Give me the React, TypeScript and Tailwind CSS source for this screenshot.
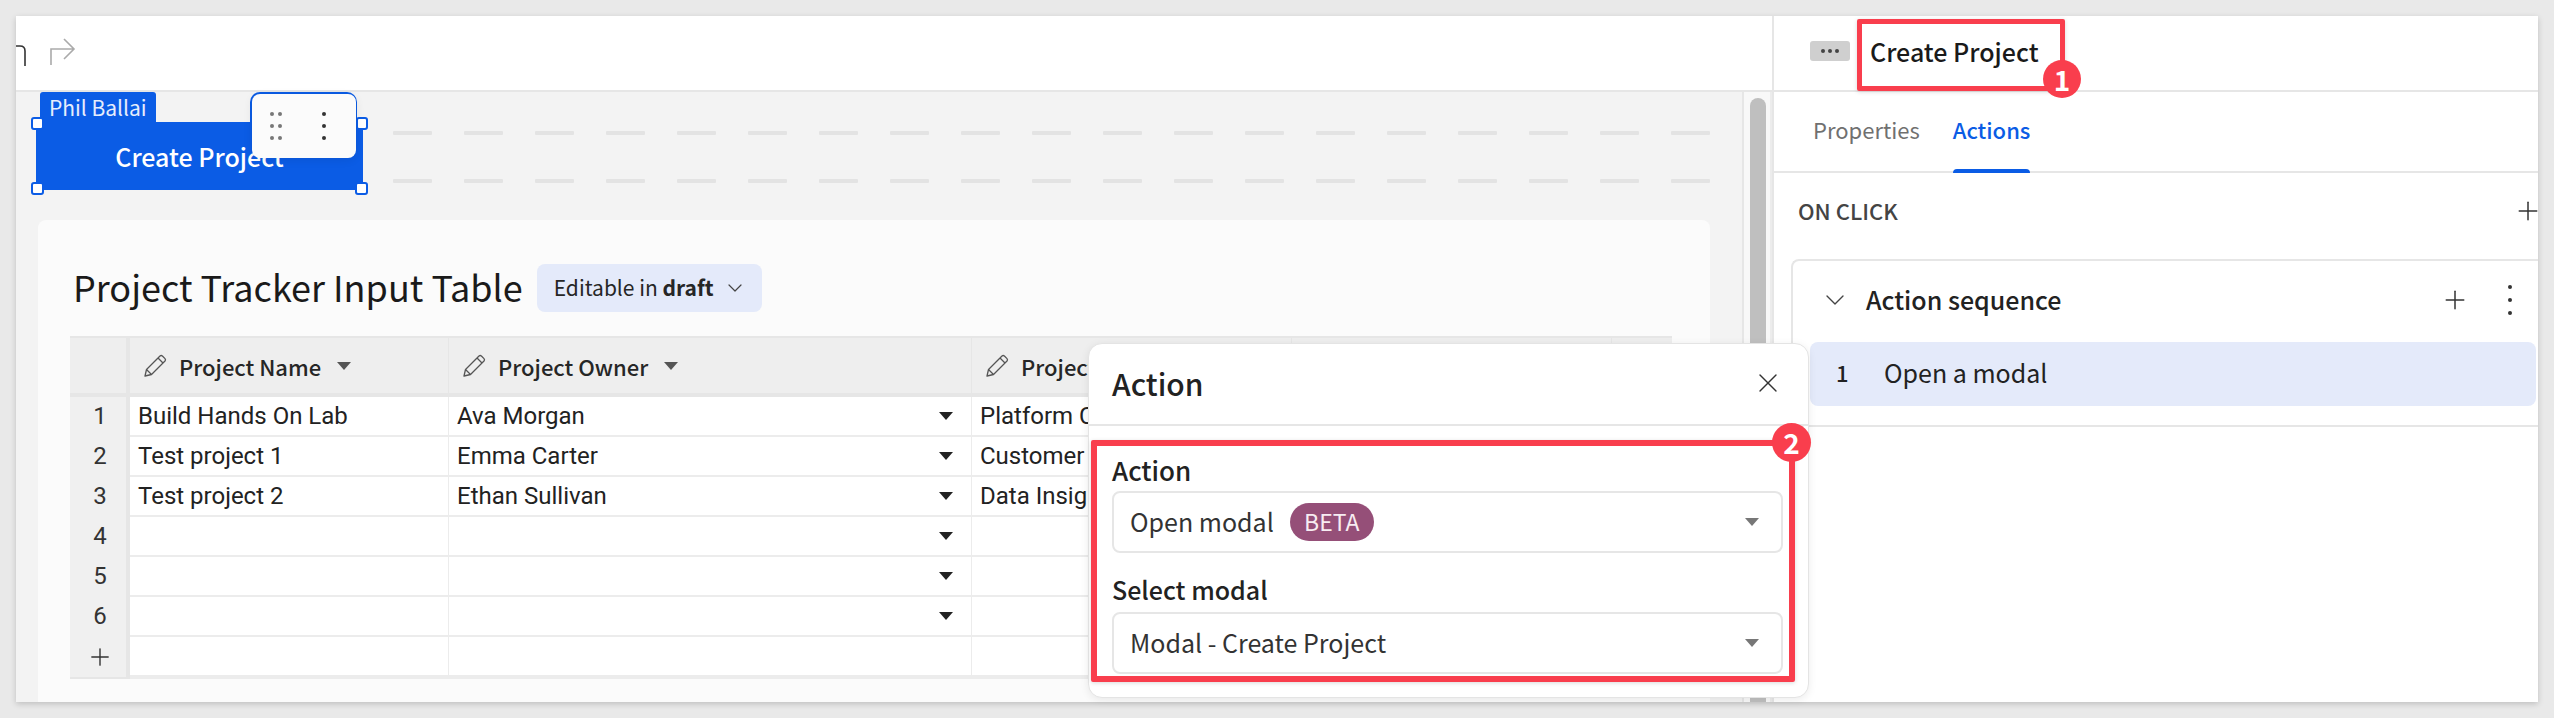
import { ChevronDown, Plus, X } from "lucide-react";

const dashes = Array.from({ length: 19 }, (_, i) => i);

const rows = [
  { n: "1", name: "Build Hands On Lab", owner: "Ava Morgan", team: "Platform Core" },
  { n: "2", name: "Test project 1", owner: "Emma Carter", team: "Customer Portal" },
  { n: "3", name: "Test project 2", owner: "Ethan Sullivan", team: "Data Insights" },
  { n: "4", name: "", owner: "", team: "" },
  { n: "5", name: "", owner: "", team: "" },
  { n: "6", name: "", owner: "", team: "" },
];

function PencilIcon() {
  return (
    <svg width="23" height="23" viewBox="0 0 23 23" fill="none" stroke="#555" strokeWidth="1.3" strokeLinejoin="round" className="shrink-0">
      <path d="M1 22 L2.5 15.5 L16 2 Q17.2 1 18.4 2 L21 4.6 Q22 5.8 21 7 L7.5 20.5 Z" />
      <path d="M14 4 L19 9 M2.5 15.5 L7.5 20.5" />
    </svg>
  );
}

function Caret({ className }: { className: string }) {
  return (
    <svg width="14" height="8" viewBox="0 0 14 8" className={className}>
      <path d="M0 0 H14 L7 8 Z" fill="currentColor" />
    </svg>
  );
}

function HeaderCell({ label, className }: { label: string; className: string }) {
  return (
    <div className={`flex items-center gap-[12px] border-r border-[#e6e6e6] pl-[14px] overflow-hidden ${className}`}>
      <PencilIcon />
      <span className="font-['Noto_Sans_CJK_SC'] text-[22px] leading-[30px] font-medium text-[#262626] whitespace-nowrap">{label}</span>
      <Caret className="ml-[4px] text-[#555] shrink-0" />
    </div>
  );
}

function Dots() {
  return (
    <div className="flex flex-col gap-[8px]">
      <span className="w-[4px] h-[4px] rounded-full bg-[#333]" />
      <span className="w-[4px] h-[4px] rounded-full bg-[#333]" />
      <span className="w-[4px] h-[4px] rounded-full bg-[#333]" />
    </div>
  );
}

export default function App() {
  return (
    <div className="w-[2554px] h-[718px] bg-[#e9e9e9] p-[16px] pr-[16px] overflow-hidden font-['Noto_Sans_CJK_SC','Noto_Sans',sans-serif]">
      <div className="relative flex h-full bg-white shadow-[0_2px_6px_rgba(0,0,0,0.18)]">
        {/* Left: workbook canvas */}
        <div className="w-[1758px] h-full flex flex-col border-r-2 border-[#e6e6e6] overflow-hidden">
          <div className="h-[76px] shrink-0 flex items-center border-b-2 border-[#e6e6e6] overflow-hidden">
            <svg width="26" height="30" viewBox="0 0 26 30" fill="none" stroke="#333" strokeWidth="1.6" className="ml-[-16px] shrink-0">
              <path d="M4 8 H20 Q25 8 25 13 V28" />
            </svg>
            <svg width="28" height="30" viewBox="0 0 28 30" fill="none" stroke="#aaa" strokeWidth="1.6" className="ml-[23px] shrink-0 mt-[-4px]">
              <path d="M2 29 V13 H24 M15 3 L25 13 L15 23" />
            </svg>
          </div>

          <div className="flex flex-1 min-h-0">
            <div className="w-[1728px] flex flex-col bg-[#f3f3f3] border-r-2 border-[#e6e6e6]">
              <div className="flex h-[128px] shrink-0">
                <div className="relative ml-[20px] mt-[30px] w-[327px] h-[68px] bg-[#0b5ce5] flex items-center justify-center">
                  <span className="text-[25px] leading-[34px] font-medium text-white">Create Project</span>
                </div>
                <div className="ml-[30px] mt-[39px] w-[1318px] h-[52px] flex flex-col justify-between overflow-hidden">
                  <div className="flex gap-[32px]">
                    {dashes.map((d) => (
                      <span key={d} className="w-[39px] h-[4px] shrink-0 rounded-[1px] bg-[#e3e3e3]" />
                    ))}
                  </div>
                  <div className="flex gap-[32px]">
                    {dashes.map((d) => (
                      <span key={d} className="w-[39px] h-[4px] shrink-0 rounded-[1px] bg-[#e3e3e3]" />
                    ))}
                  </div>
                </div>
              </div>

              <div className="ml-[22px] w-[1672px] flex-1 rounded-t-lg bg-[#fbfbfb] pt-[44px] pl-[32px]">
                <div className="flex items-center h-[48px] pl-[3px] mb-[24px]">
                  <h1 className="text-[36px] leading-[48px] font-normal text-[#1a1a1a] mt-[-5px]">Project Tracker Input Table</h1>
                  <div className="ml-[14px] w-[225px] h-[48px] rounded-lg bg-[#e4eafa] flex items-center pl-[17px] text-[21px] text-[#262626] whitespace-nowrap">
                    <span>
                      Editable in <b className="font-semibold">draft</b>
                    </span>
                    <ChevronDown size={24} strokeWidth={1.2} className="ml-[9px] text-[#444]" />
                  </div>
                </div>

                <div className="w-[1602px] border-t-2 border-[#e6e6e6]">
                  <div className="flex h-[59px] bg-[#eeeeee] border-b-4 border-[#e6e6e6]">
                    <div className="w-[60px] border-r-4 border-[#e6e6e6]" />
                    <HeaderCell label="Project Name" className="w-[319px]" />
                    <HeaderCell label="Project Owner" className="w-[523px]" />
                    <HeaderCell label="Project Team" className="w-[320px]" />
                    <div className="w-[320px] border-r border-[#e6e6e6]" />
                    <div className="flex-1" />
                  </div>
                  {rows.map((r) => (
                    <div key={r.n} className="flex h-[40px] font-['Roboto'] text-[24px] leading-[38px] text-[#222]">
                      <div className="w-[60px] bg-[#f0f0f0] border-r-4 border-[#e6e6e6] text-center text-[#333] pl-[4px]">{r.n}</div>
                      <div className="w-[319px] bg-white border-b-2 border-r border-[#ececec] pl-[8px]">{r.name}</div>
                      <div className="w-[523px] bg-white border-b-2 border-r border-[#ececec] pl-[8px] flex justify-between items-center pr-[18px]">
                        <span>{r.owner}</span>
                        <Caret className="text-[#222]" />
                      </div>
                      <div className="w-[320px] bg-white border-b-2 border-r border-[#ececec] pl-[8px]">{r.team}</div>
                    </div>
                  ))}
                  <div className="flex h-[42px] font-['Roboto'] text-[28px] leading-[38px]">
                    <div className="w-[60px] bg-[#f0f0f0] border-r-4 border-b-2 border-[#e6e6e6] flex items-center justify-center pl-[4px]">
                      <Plus size={28} strokeWidth={1.2} className="text-[#333]" />
                    </div>
                    <div className="w-[319px] bg-white border-b-4 border-r border-[#ececec]" />
                    <div className="w-[523px] bg-white border-b-4 border-r border-[#ececec]" />
                    <div className="w-[320px] bg-white border-b-4 border-r border-[#ececec]" />
                  </div>
                </div>
              </div>
            </div>

            {/* Scrollbar */}
            <div className="flex-1 bg-[#f8f8f8] pl-[6px] pt-[6px] border-r-2 border-[#ececec]">
              <div className="w-[16px] h-full rounded-t-full bg-[#bfbfbf]" />
            </div>
          </div>
        </div>

        {/* Right: properties panel */}
        <div className="flex-1 min-w-0 flex flex-col overflow-hidden">
          <div className="h-[76px] shrink-0 flex items-center border-b-2 border-[#e6e6e6] pl-[36px] pb-[2px]">
            <div className="w-[40px] h-[20px] rounded-[3px] bg-[#cfcfcf] flex items-center justify-center gap-[3px] mt-[-2px]">
              <span className="w-[4px] h-[4px] rounded-full bg-[#444]" />
              <span className="w-[4px] h-[4px] rounded-full bg-[#444]" />
              <span className="w-[4px] h-[4px] rounded-full bg-[#444]" />
            </div>
            <span className="ml-[20px] text-[25px] leading-[34px] font-medium text-[#1a1a1a] mt-[-2px]">Create Project</span>
          </div>

          <div className="h-[81px] shrink-0 flex border-b-2 border-[#e6e6e6] pl-[39px] gap-[33px] text-[22px]">
            <div className="h-full flex items-center pb-[4px] text-[#707070]">Properties</div>
            <div className="relative h-full flex items-center pb-[4px] text-[#0b5ce5] font-medium">
              Actions
              <span className="absolute left-0 right-0 bottom-[-2px] h-[4px] rounded-t-sm bg-[#0b5ce5]" />
            </div>
          </div>

          <div className="flex items-center justify-between h-[80px] pl-[24px] pb-[5px] shrink-0">
            <span className="text-[22px] font-medium text-[#444]">ON CLICK</span>
            <Plus size={30} strokeWidth={1.2} className="text-[#333] mr-[-5px]" />
          </div>

          <div className="ml-[17px] mt-[6px] h-[168px] shrink-0 border-t-2 border-l-2 border-b-2 border-[#e6e6e6] rounded-tl-lg pl-[17px] pb-[18px]">
            <div className="flex items-center h-[78px] pl-[9px] pr-[26px] pb-[1px]">
              <ChevronDown size={32} strokeWidth={1} className="text-[#444]" />
              <span className="ml-[15px] text-[25px] font-medium text-[#222]">Action sequence</span>
              <Plus size={30} strokeWidth={1.2} className="ml-auto text-[#333]" />
              <div className="ml-[38px] flex flex-col gap-[9px]">
                <span className="w-[4px] h-[4px] rounded-full bg-[#333]" />
                <span className="w-[4px] h-[4px] rounded-full bg-[#333]" />
                <span className="w-[4px] h-[4px] rounded-full bg-[#333]" />
              </div>
            </div>
            <div className="mt-[3px] h-[64px] w-[726px] rounded-lg bg-[#e4eafa] flex items-center pl-[26px] pb-[3px] text-[25px] text-[#222]">
              <span className="w-[48px] font-medium text-[22px]">1</span>
              <span>Open a modal</span>
            </div>
          </div>
        </div>

        {/* Selected element overlays */}
        <div className="absolute left-[24px] top-[76px] w-[116px] h-[30px] rounded-t-[3px] bg-[#0b5ce5] text-[21px] leading-[30px] text-[#e6edfc] pl-[9px]">
          Phil Ballai
        </div>
        <span className="absolute left-[15px] top-[101px] w-[13px] h-[13px] rounded-[3px] border-2 border-[#0b5ce5] bg-white" />
        <span className="absolute left-[340px] top-[101px] w-[12px] h-[13px] rounded-[3px] border-2 border-[#0b5ce5] bg-white" />
        <span className="absolute left-[15px] top-[166px] w-[13px] h-[13px] rounded-[3px] border-2 border-[#0b5ce5] bg-white" />
        <span className="absolute left-[339px] top-[166px] w-[13px] h-[13px] rounded-[3px] border-2 border-[#0b5ce5] bg-white" />
        <div className="absolute left-[234px] top-[76px] w-[107px] h-[40px] rounded-t-[10px] bg-[#0b5ce5]" />
        <div className="absolute left-[236px] top-[78px] w-[104px] h-[64px] rounded-[8px] bg-[#fbfbfb] shadow-[0_2px_10px_rgba(0,0,0,0.08)] flex items-center justify-between pl-[18px] pr-[15px]">
          <div className="flex gap-[4px]">
            <div className="flex flex-col gap-[8px]">
              <span className="w-[4px] h-[4px] rounded-full bg-[#777]" />
              <span className="w-[4px] h-[4px] rounded-full bg-[#777]" />
              <span className="w-[4px] h-[4px] rounded-full bg-[#777]" />
            </div>
            <div className="flex flex-col gap-[8px]">
              <span className="w-[4px] h-[4px] rounded-full bg-[#777]" />
              <span className="w-[4px] h-[4px] rounded-full bg-[#777]" />
              <span className="w-[4px] h-[4px] rounded-full bg-[#777]" />
            </div>
          </div>
          <div className="mr-[15px]">
            <Dots />
          </div>
        </div>

        {/* Action popover */}
        <div className="absolute left-[1072px] top-[327px] w-[721px] h-[355px] rounded-[14px] bg-white border border-[#e4e4e4] shadow-[0_2px_8px_rgba(0,0,0,0.08)]">
          <div className="h-[82px] flex items-center justify-between border-b-2 border-[#e6e6e6] pl-[23px] pr-[24px] pb-[2px]">
            <span className="text-[30px] font-medium text-[#222]">Action</span>
            <X size={32} strokeWidth={1} className="text-[#333]" />
          </div>
          <div className="px-[23px] pr-[25px] pt-[24px]">
            <div className="text-[26px] leading-[40px] font-medium text-[#222]">Action</div>
            <div className="mt-[1px] h-[62px] rounded-lg border-2 border-[#e6e6e6] flex items-center pl-[16px] pr-[22px] text-[25px] text-[#333]">
              <span>Open modal</span>
              <span className="ml-[16px] w-[84px] h-[38px] rounded-full bg-[#954f78] text-[23px] leading-[36px] text-center text-[#f7ecf2]">BETA</span>
              <Caret className="ml-auto text-[#777]" />
            </div>
            <div className="mt-[16px] text-[25px] leading-[40px] font-medium text-[#222]">Select modal</div>
            <div className="mt-[3px] h-[62px] rounded-lg border-2 border-[#e6e6e6] flex items-center pl-[16px] pr-[22px] pb-[1px] text-[25px] text-[#333]">
              <span>Modal - Create Project</span>
              <Caret className="ml-auto text-[#777]" />
            </div>
          </div>
        </div>

        {/* Annotations */}
        <div className="absolute left-[1841px] top-[3px] w-[208px] h-[72px] border-[5px] border-[#f93e4d] rounded-[2px] shadow-[0_1px_4px_rgba(0,0,0,0.15)]" />
        <div className="absolute left-[2027px] top-[44px] w-[38px] h-[38px] rounded-full bg-[#f93e4d] text-white text-[28px] leading-[38px] font-bold text-center">1</div>
        <div className="absolute left-[1075px] top-[424px] w-[704px] h-[242px] border-[6px] border-[#f93e4d] rounded-[2px] shadow-[0_1px_4px_rgba(0,0,0,0.15)]" />
        <div className="absolute left-[1756px] top-[407px] w-[39px] h-[39px] rounded-full bg-[#f93e4d] text-white text-[28px] leading-[39px] font-bold text-center">2</div>
      </div>
    </div>
  );
}
